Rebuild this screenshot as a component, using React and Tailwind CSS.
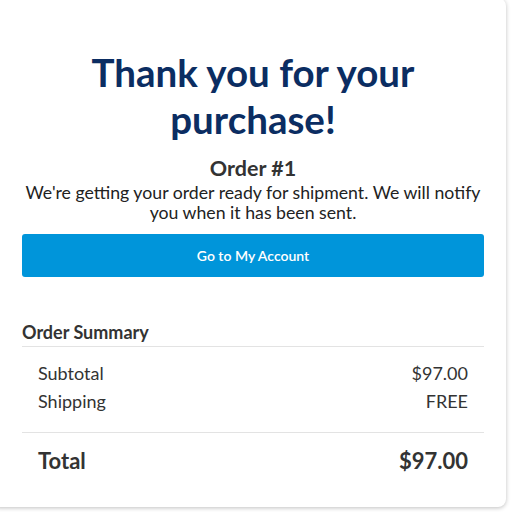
export default function App() {
  return (
    <div className="w-[511px] h-[512px] bg-white overflow-hidden" style={{ fontFamily: "Lato, 'Open Sans', sans-serif" }}>
      <div className="w-[514px] h-[509px] -mt-[2px] -ml-[8px] bg-white rounded-lg shadow-[0_1px_4px_rgba(0,0,0,0.25)] pl-[30px] pr-[22px] pt-[51px] text-[#333]">
        <h1 className="text-center text-[38.5px] leading-[47px] font-bold text-[#0b2d62] px-[60px]">
          Thank you for your purchase!
        </h1>
        <h2 className="mt-[13px] text-center text-[21.5px] leading-[24px] font-bold text-[#333]">Order #1</h2>
        <p className="mt-[3px] -mx-[6px] text-center text-[17.7px] leading-[20px] text-[#222]">
          We're getting your order ready for shipment. We will notify you when it has been sent.
        </p>
        <button className="mt-[11px] w-full h-[43px] rounded-[3px] bg-[#0095da] text-white text-[14px] font-semibold">
          Go to My Account
        </button>
        <div className="mt-[43px] pb-[2px] border-b border-[#e3e3e3] text-[18px] leading-[24px] font-bold text-[#333]">
          Order Summary
        </div>
        <div className="px-[16px] pt-[12px] pb-[17px] border-b border-[#e3e3e3] text-[18px] leading-[28px] text-[#333]">
          <div className="flex justify-between">
            <span>Subtotal</span>
            <span>$97.00</span>
          </div>
          <div className="flex justify-between">
            <span>Shipping</span>
            <span>FREE</span>
          </div>
        </div>
        <div className="px-[16px] pt-[16px] flex justify-between text-[22px] leading-[24px] font-bold text-[#333]">
          <span>Total</span>
          <span>$97.00</span>
        </div>
      </div>
    </div>
  );
}
